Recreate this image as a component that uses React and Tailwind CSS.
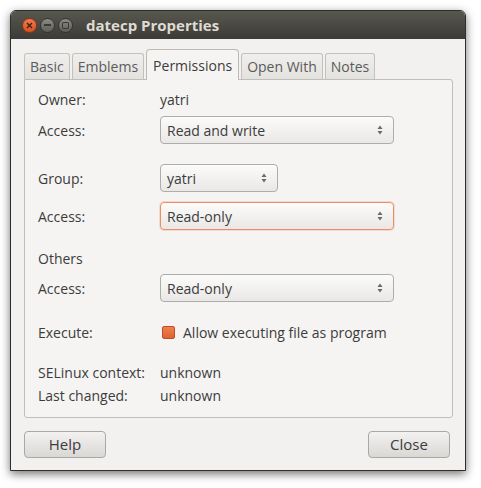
import React from 'react';

const font = { fontFamily: '"Open Sans", "Noto Sans", "DejaVu Sans", sans-serif' };

function Arrows() {
  return (
    <svg width="8" height="14" viewBox="0 0 8 14" className="shrink-0">
      <path d="M4 2.5 L6.5 6 L1.5 6 Z" fill="#6a6964" />
      <path d="M4 11.5 L6.5 8 L1.5 8 Z" fill="#6a6964" />
    </svg>
  );
}

function Combo({ value, width, focus }) {
  return (
    <div
      className={`h-[28px] flex items-center justify-between pl-[6px] pr-[9px] rounded-[4px] border bg-gradient-to-b from-[#fbfbfa] to-[#e9e8e6] text-[14px] text-[#3c3c3c] ${
        focus ? 'border-[#ec8d66] shadow-[0_0_0_1px_rgba(236,141,102,0.25)]' : 'border-[#aeada9]'
      }`}
      style={{ width }}
    >
      <span>{value}</span>
      <Arrows />
    </div>
  );
}

function Row({ label, children, className = '' }) {
  return (
    <div className={`flex items-center ${className}`}>
      <div className="w-[122px] shrink-0">{label}</div>
      {children}
    </div>
  );
}

function Tab({ label, active }) {
  if (active) {
    return (
      <div className="h-[31px] px-[6px] flex items-center rounded-t-[4px] border border-b-0 border-[#bcbab6] bg-[#f5f4f3] text-[#3c3c3c] relative top-[1px] z-10">
        {label}
      </div>
    );
  }
  return (
    <div className="h-[26px] px-[5px] flex items-center rounded-t-[3px] border border-b-0 border-[#c3c1bd] bg-gradient-to-b from-[#f0efed] to-[#e3e2df] text-[#5b5b5b]">
      {label}
    </div>
  );
}

function Button({ label }) {
  return (
    <div className="w-[82px] h-[27px] flex items-center justify-center rounded-[4px] border border-[#a9a8a4] bg-gradient-to-b from-[#f3f2f1] to-[#d9d8d5] text-[#3c3c3c] text-[15px]">
      {label}
    </div>
  );
}

export default function App() {
  return (
    <div className="w-[481px] h-[488px] bg-white pt-[10px] pl-[10px]" style={font}>
      <div className="w-[456px] h-[461px] flex flex-col bg-[#f2f1f0] border border-[#2f2e2b] rounded-t-[6px] shadow-[0_3px_10px_rgba(0,0,0,0.55)] overflow-hidden">
        {/* Title bar */}
        <div className="h-[28px] shrink-0 flex items-center bg-gradient-to-b from-[#58574f] to-[#3c3b37] pl-[11px]">
          <div className="w-[15px] h-[15px] rounded-full bg-gradient-to-b from-[#f27a4c] to-[#d9501f] border border-[#8f3517] flex items-center justify-center">
            <svg width="7" height="7" viewBox="0 0 7 7">
              <path d="M1 1 L6 6 M6 1 L1 6" stroke="#3a2219" strokeWidth="1.4" />
            </svg>
          </div>
          <div className="ml-[3px] w-[15px] h-[15px] rounded-full bg-gradient-to-b from-[#8c8b86] to-[#5e5d58] border border-[#34332f] flex items-center justify-center">
            <div className="w-[7px] h-[2px] bg-[#3a3935]" />
          </div>
          <div className="ml-[3px] w-[15px] h-[15px] rounded-full bg-gradient-to-b from-[#8c8b86] to-[#5e5d58] border border-[#34332f] flex items-center justify-center">
            <div className="w-[7px] h-[7px] border-[1.5px] border-[#3a3935] rounded-[1px]" />
          </div>
          <div className="ml-[13px] text-[15px] font-bold text-[#dfdbd2]">datecp Properties</div>
        </div>

        {/* Body */}
        <div className="flex-1 flex flex-col px-[13px] pt-[11px] text-[14px] text-[#3c3c3c]">
          <div className="flex items-end gap-[2px] h-[29px]">
            <Tab label="Basic" />
            <Tab label="Emblems" />
            <Tab label="Permissions" active />
            <Tab label="Open With" />
            <Tab label="Notes" />
          </div>
          <div className="w-[429px] h-[339px] border border-[#c0beba] rounded-b-[3px] rounded-tr-[3px] bg-[#f5f4f3] pl-[13px] pt-[9px] flex flex-col">
            <Row label="Owner:" className="h-[20px]">
              <span>yatri</span>
            </Row>
            <Row label="Access:" className="mt-[7px]">
              <Combo value="Read and write" width={234} />
            </Row>
            <Row label="Group:" className="mt-[20px]">
              <Combo value="yatri" width={118} />
            </Row>
            <Row label="Access:" className="mt-[10px]">
              <Combo value="Read-only" width={234} focus />
            </Row>
            <div className="h-[20px] mt-[18px] flex items-center">Others</div>
            <Row label="Access:" className="mt-[6px]">
              <Combo value="Read-only" width={234} />
            </Row>
            <Row label="Execute:" className="h-[20px] mt-[20px]">
              <div className="ml-[2px] w-[13px] h-[13px] rounded-[2px] bg-gradient-to-b from-[#f0804f] to-[#e0612f] border border-[#b84f26]" />
              <span className="ml-[8px]">Allow executing file as program</span>
            </Row>
            <Row label="SELinux context:" className="h-[20px] mt-[20px]">
              <span>unknown</span>
            </Row>
            <Row label="Last changed:" className="h-[20px] mt-[3px]">
              <span>unknown</span>
            </Row>
          </div>
          <div className="flex justify-between mt-[13px] pr-[2px]">
            <Button label="Help" />
            <Button label="Close" />
          </div>
        </div>
      </div>
    </div>
  );
}
